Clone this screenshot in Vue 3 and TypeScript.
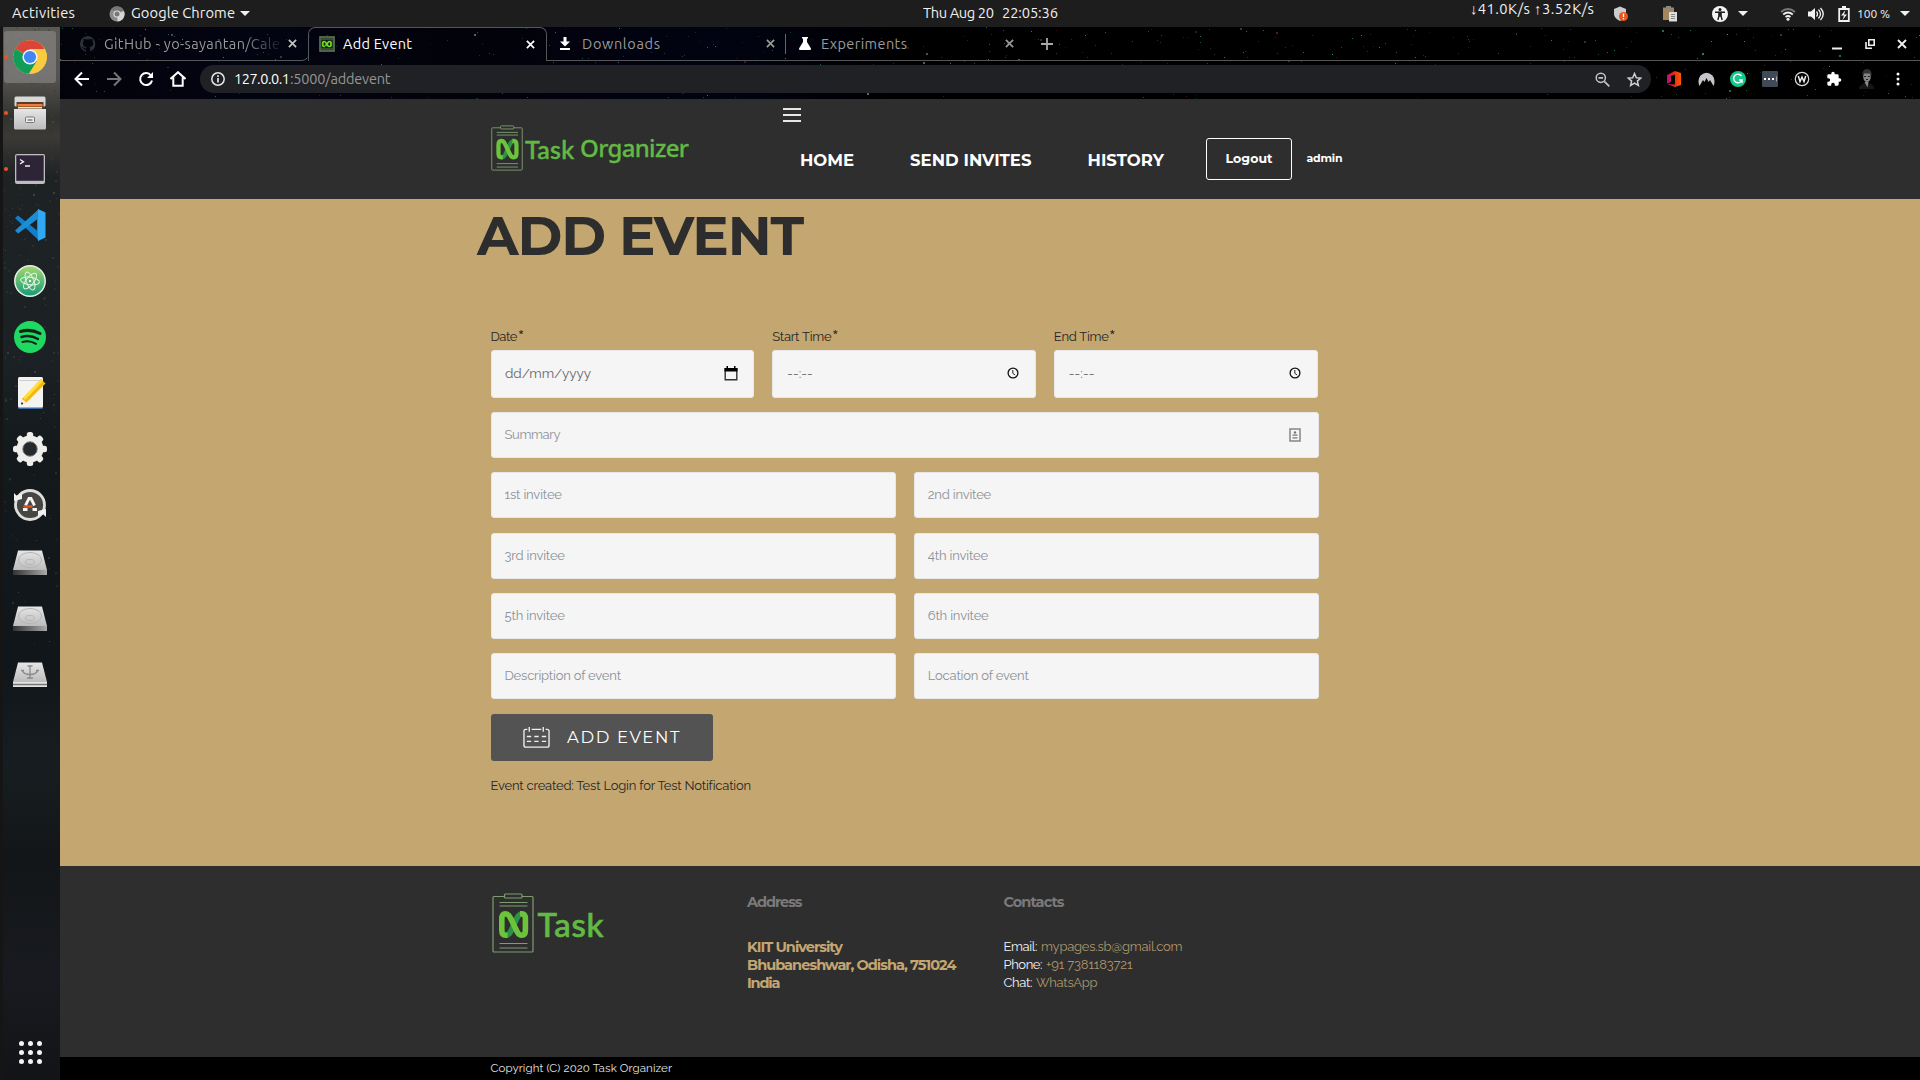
<script setup lang="ts">
interface Star { x: number; y: number; r: number; c: string; o: number }

// Spreads or tightens a label's tracking until it fills the given width.
const vFit = {
  mounted(el: HTMLElement, binding: { value: number }) {
    el.style.display = 'inline-block'
    el.style.whiteSpace = 'pre'
    const natural = el.getBoundingClientRect().width
    const count = Math.max((el.textContent ?? '').length - 1, 1)
    el.style.letterSpacing = `${(binding.value - natural) / count}px`
    el.style.width = `${binding.value}px`
  },
}

let seed = 11
const rnd = (): number => {
  seed = (seed * 16807) % 2147483647
  return seed / 2147483647
}
const tints = ['#2a8a5a', '#1c5a34', '#66707a', '#1fae78', '#3a4450', '#5a2020', '#24502e']
const stars: Star[] = Array.from({ length: 480 }, () => ({
  x: Math.round(rnd() * 1860),
  y: Math.round(rnd() * 71),
  r: rnd() > 0.9 ? 2 : 1,
  c: tints[Math.floor(rnd() * tints.length)],
  o: 0.35 + rnd() * 0.65,
}))
const specks: Star[] = Array.from({ length: 260 }, () => {
  const t = rnd()
  return {
    x: Math.round(rnd() * 56),
    y: Math.round(t * t * 640),
    r: rnd() > 0.6 ? 2 : 1,
    c: rnd() > 0.5 ? '#5a5852' : '#3c4040',
    o: 0.15 + rnd() * 0.45,
  }
})

const rows: { text: string; w: number }[][] = [
  [{ text: '1st invitee', w: 57.5 }, { text: '2nd invitee', w: 63.5 }],
  [{ text: '3rd invitee', w: 60.5 }, { text: '4th invitee', w: 60.5 }],
  [{ text: '5th invitee', w: 60.5 }, { text: '6th invitee', w: 61 }],
  [{ text: 'Description of event', w: 116.5 }, { text: 'Location of event', w: 101 }],
]
const times = [{ label: 'Start Time', w: 59.5 }, { label: 'End Time', w: 55 }]
const dock = ['chrome', 'files', 'terminal', 'code', 'atom', 'spotify', 'editor', 'gear', 'updater', 'disk', 'disk', 'usb']
const contacts = [
  { k: 'Email:', kw: 34, v: 'mypages.sb@gmail.com', vw: 141.5 },
  { k: 'Phone:', kw: 39, v: '+91 7381183721', vw: 86.5 },
  { k: 'Chat:', kw: 29, v: 'WhatsApp', vw: 61.5 },
]
</script>

<template>
  <svg width="0" height="0" class="defs">
    <defs>
      <linearGradient id="atomg" x1="0" y1="0" x2="0" y2="1"><stop offset="0" stop-color="#a5d96f" /><stop offset="1" stop-color="#129c77" /></linearGradient>
      <linearGradient id="metal" x1="0" y1="0" x2="0" y2="1"><stop offset="0" stop-color="#e6e6e6" /><stop offset="1" stop-color="#bcbcbc" /></linearGradient>
      <linearGradient id="base" x1="0" y1="0" x2="1" y2="0"><stop offset="0" stop-color="#333" /><stop offset="1" stop-color="#aaa" /></linearGradient>
      <linearGradient id="officeg" x1="0" y1="0" x2="1" y2="0"><stop offset="0" stop-color="#a3168a" /><stop offset=".4" stop-color="#e8201a" /><stop offset="1" stop-color="#ff5a00" /></linearGradient>
      <symbol id="board" viewBox="0 0 42 60">
        <g fill="none" stroke="#7d9c70" stroke-width="1.2">
          <rect x="1" y="3.5" width="40" height="55.5" rx="1" />
          <rect x="12.500" y="1" width="17.500" height="4" rx="1" fill="#2e2e2e" />
          <path d="M7.500 9.500h28M7.500 13h28M7.500 50.500h28M7.500 55h28" />
        </g>
        <g fill="none" stroke="#6cc33c" stroke-width="5.600">
          <path d="M14 42.200Q17 42 19 38L25 25Q27 21 30 21" stroke="#2f9047" />
          <path d="M15.500 42.300H13.500Q9.800 42.300 9.800 37V26Q9.800 20.800 13.500 20.800Q16.500 20.800 18.500 25L25 38.500Q26.800 42.300 29.800 42.300Q33.400 42.300 33.400 37V26Q33.400 20.800 29.800 20.800H28" />
        </g>
      </symbol>
      <symbol id="cross" viewBox="0 0 10 10"><path d="M1 1l8 8M9 1L1 9" stroke="currentColor" stroke-width="1.9" /></symbol>
      <symbol id="clock" viewBox="0 0 12 12"><circle cx="6" cy="6" r="4.900" fill="none" stroke="#111" stroke-width="1.300" /><path d="M5.800 3v3.300l2.300 1.700" fill="none" stroke="#222" /></symbol>
    </defs>
  </svg>

  <div class="desktop">
    <header class="topbar">
      <div class="left">
        <span v-fit="63" class="act">Activities</span>
        <svg class="mono" width="16" height="16" viewBox="0 0 16 16"><circle cx="8" cy="8" r="7.500" fill="#8b8b8b" /><path d="M8 8L15 5A7.500 7.500 0 0 1 8.500 15.500z" fill="#d5d5d5" /><path d="M1.500 4A7.500 7.500 0 0 1 15 5H8z" fill="#777" /><circle cx="8" cy="8" r="3.600" fill="#ddd" /><circle cx="8" cy="8" r="2.500" fill="#777" /></svg>
        <span v-fit="104">Google Chrome</span><i class="tri" />
      </div>
      <div class="clock"><span v-fit="71">Thu Aug 20</span><span v-fit="56">22:05:36</span></div>
      <div class="right">
        <span v-fit="124" class="net">↓41.0K/s ↑3.52K/s</span>
        <svg class="s1" width="16" height="16" viewBox="0 0 16 16"><path d="M1 3l6-2.500L13 3v5q0 4-6 7Q1 12 1 8z" fill="#ccc" /><circle cx="10.500" cy="10.500" r="4.500" fill="#e9541f" /><path d="M10.500 7.500v3.500M10.500 12v1.300" stroke="#fff" stroke-width="1.300" /></svg>
        <svg class="s2" width="16" height="16" viewBox="0 0 16 16"><path d="M1 1.500h11V14H1z" fill="#a5855a" /><path d="M4 0h5v3H4z" fill="#888" /><path d="M7 6h8v9.500H7z" fill="#ddd" /><path d="M9 8.500h4M9 10.500h4M9 12.500h4" stroke="#777" stroke-width=".8" /></svg>
        <svg class="s3" width="16" height="16" viewBox="0 0 16 16"><circle cx="8" cy="8" r="8" fill="#f4f4f4" /><circle cx="8" cy="3.600" r="1.500" fill="#1d1d1d" /><path d="M3 6.300h10M6.900 10l-1 4M9.100 10l1 4" stroke="#1d1d1d" stroke-width="1.400" /><path d="M6.200 5.700h3.600v5H6.200z" fill="#1d1d1d" /></svg><i class="tri t3" />
        <svg class="s4" width="16" height="14" viewBox="0 0 16 14"><g fill="none" stroke-width="1.800"><path d="M1 5q7-6 14 0" stroke="#777" /><path d="M3.200 7.500q4.800-4 9.600 0" stroke="#eee" /><path d="M5.500 10q2.500-2 5 0" stroke="#eee" /></g><circle cx="8" cy="12.200" r="1.500" fill="#eee" /></svg>
        <svg class="s5" width="16" height="14" viewBox="0 0 16 14"><path d="M0 4.500h3L7 1v12L3 9.500H0z" fill="#f2f2f2" /><path d="M8.500 4.500q2 2.500 0 5M10.500 2.500q4 4.500 0 9M12.500 1q5.500 6 0 12" fill="none" stroke="#f2f2f2" stroke-width="1.300" /></svg>
        <svg class="s6" width="12" height="16" viewBox="0 0 12 16"><path d="M4 1h4M1.200 3h9.600v12H1.200z" fill="none" stroke="#f2f2f2" stroke-width="1.800" /><path d="M7.500 4L3 9.500h3L4.500 14 9 8.500H6z" fill="#f2f2f2" /></svg>
        <span v-fit="33" class="pct">100 %</span><i class="tri t4" />
      </div>
    </header>

    <div class="body">
      <aside class="dock">
        <svg class="stones" width="57" height="1053"><rect v-for="(s, i) in specks" :key="i" :x="s.x" :y="s.y" :width="s.r" :height="s.r" :fill="s.c" :opacity="s.o" /></svg>
        <div v-for="(d, i) in dock" :key="i" class="tile" :class="{ on: i === 0, low: i > 8 }">
          <i v-if="i < 3" class="run" />
          <svg v-if="d === 'chrome'" width="34" height="34" viewBox="0 0 34 34"><circle cx="17" cy="17" r="16.800" fill="#fbcb3f" /><path d="M17 17L2.400 8.600A16.800 16.800 0 0 1 31.600 9H17z" fill="#dc4437" /><path d="M17 17l-1 0L2.400 8.600A16.800 16.800 0 0 0 16 33.800L24 21z" fill="#109d58" /><path d="M24 21l-8 12.800A16.800 16.800 0 0 0 31.800 9H17z" fill="#fbcb3f" /><circle cx="17" cy="17" r="7.600" fill="#f3f3f3" /><circle cx="17" cy="17" r="6.100" fill="#4285f4" /></svg>
          <svg v-else-if="d === 'files'" width="34" height="34" viewBox="0 0 34 34"><rect x="1.500" y=".5" width="31" height="10" rx="1.500" fill="#d8d8d8" /><rect x="3.500" y="6" width="27" height="7" fill="#5b3c25" /><path d="M4.500 8h25v2.500h-25z" fill="#f07a3a" /><path d="M5 11h24v1.500H5z" fill="#f3e6d0" /><path d="M1 13h32v19q0 1.500-1.500 1.500h-29Q1 33.500 1 32z" fill="url(#metal)" /><rect x="12.500" y="21" width="9" height="5.500" rx="1" fill="#eee" stroke="#777" /><rect x="14.500" y="23" width="5" height="2" fill="#999" /></svg>
          <svg v-else-if="d === 'terminal'" width="30" height="30" viewBox="0 0 30 30"><rect width="30" height="30" rx="2" fill="#bdbdbd" /><rect x="1.300" y="1.300" width="27.400" height="25.500" fill="#2d2438" /><path d="M5 5.500l3.500 2.200L5 10M10 12h5" fill="none" stroke="#eee" stroke-width="1.400" /></svg>
          <svg v-else-if="d === 'code'" width="34" height="34" viewBox="0 0 34 34"><path d="M2 10l3-2.500L26 24v8.500z" fill="#0f7fce" /><path d="M2 22.500l3 3L26 10V1z" fill="#1a8fd8" /><path d="M25 1l7.500 3.500v25L25 33z" fill="#30a9f2" /><path d="M25 1v32l-1-7V8z" fill="#188bd8" /></svg>
          <svg v-else-if="d === 'atom'" width="32" height="32" viewBox="0 0 32 32"><circle cx="16" cy="16" r="15.200" fill="url(#atomg)" stroke="#e8efe8" stroke-width="1.500" /><g fill="none" stroke="#e2f5e4" stroke-width="1"><ellipse cx="16" cy="16" rx="9.500" ry="3.800" transform="rotate(8 16 16)" /><ellipse cx="16" cy="16" rx="9.500" ry="3.800" transform="rotate(68 16 16)" /><ellipse cx="16" cy="16" rx="9.500" ry="3.800" transform="rotate(128 16 16)" /></g><circle cx="16" cy="16" r="1.200" fill="#fff" /></svg>
          <svg v-else-if="d === 'spotify'" width="32" height="32" viewBox="0 0 32 32"><circle cx="16" cy="16" r="16" fill="#1fd962" /><g fill="none" stroke="#12241a" stroke-linecap="round"><path d="M6.500 10.500q10-3 19.500 2" stroke-width="3" /><path d="M7.500 16q8.500-2.500 16.500 2" stroke-width="2.500" /><path d="M8.500 21q7-2 13.500 1.800" stroke-width="2" /></g></svg>
          <svg v-else-if="d === 'editor'" width="32" height="34" viewBox="0 0 32 34"><rect x="4" y="2" width="25" height="31" rx="1.500" fill="#3f68a8" /><rect x="4" y="1" width="25" height="30.500" rx="1.500" fill="#f3f3f1" /><path d="M5.500 4.500h22" stroke="#aaa" stroke-dasharray="1 1" /><path d="M8 23L27 3l4.500 4.500L12.500 26.500 7 28.500z" fill="#f4b90c" /><path d="M9.500 21.500L27 3l2 2L11 24z" fill="#ffdf3d" /><path d="M8 23l4.500 3.500L7 28.500z" fill="#f4ede0" /><circle cx="8" cy="27.500" r="1" fill="#222" /></svg>
          <svg v-else-if="d === 'gear'" width="34" height="34" viewBox="0 0 34 34"><g fill="#eeeeec"><rect v-for="n in 8" :key="n" x="13.800" y="0" width="6.400" height="8" rx="2.500" :transform="`rotate(${n * 45} 17 17)`" /></g><circle cx="17" cy="17" r="10.200" fill="none" stroke="#eeeeec" stroke-width="6.500" /><circle cx="17" cy="17" r="7.200" fill="#26292b" stroke="#777" /></svg>
          <svg v-else-if="d === 'updater'" width="34" height="34" viewBox="0 0 34 34"><circle cx="17" cy="17" r="14.500" fill="#474642" stroke="#dedede" stroke-width="2.800" /><path d="M1 13V5l2.500 2.500L9 5.500 9 11zM33 21v8l-2.500-2.500L25 28.500 25 23z" fill="#f0f0f0" /><path d="M12.500 17.500L16 10.500h2L21.500 17.500M10 21.500h4.500M19.500 21.500H24" fill="none" stroke="#f4f4f4" stroke-width="2.800" /><path d="M10.500 18.500h9" stroke="#e95420" stroke-width="2.400" /></svg>
          <svg v-else width="34" height="26" viewBox="0 0 34 26"><path d="M5 .5h24L34 20H0z" fill="url(#metal)" /><path d="M0 20h34v5H0z" :fill="d === 'usb' ? '#e2e2e2' : 'url(#base)'" /><g v-if="d === 'disk'" fill="none" stroke="#b4b4b4"><ellipse cx="17" cy="10" rx="11.500" ry="7.500" /><ellipse cx="17" cy="12" rx="4.500" ry="2.500" /></g><g v-else fill="none" stroke="#8b8b8b" stroke-width="1.300"><path d="M17 4v12M14 16h6M9.500 8.500q1 4 7.500 4t7.500-4M14.500 4h5M8 8.500h3M23 8.500h3" /><path d="M0 22.500h34" stroke="#777" /></g></svg>
        </div>
        <div class="apps"><i v-for="n in 9" :key="n" /></div>
      </aside>

      <main class="window">
        <div class="chrome">
          <svg class="sky" width="1860" height="72"><rect v-for="(s, i) in stars" :key="i" :x="s.x" :y="s.y" :width="s.r" :height="s.r" :fill="s.c" :opacity="s.o" /></svg>
          <div class="tabs">
            <div class="tab first">
              <svg width="16" height="16" viewBox="0 0 16 16"><path fill="#2b3137" d="M8 0C3.600 0 0 3.600 0 8c0 3.500 2.300 6.500 5.500 7.600.4.100.5-.2.500-.4v-1.500c-2 .4-2.700-.9-2.900-1.500-.3-.6-.8-1.100-1.200-1.300 1.700-.4 1.900 1.500 3.100 1.500.5 0 .8-.1 1-.2.100-.5.400-.9.600-1.100-1.800-.2-3.600-.9-3.600-4 0-.9.300-1.600.8-2.200-.1-.2-.4-1 .1-2.100 0 0 .7-.2 2.200.8a7.500 7.500 0 0 1 4 0c1.500-1 2.200-.8 2.200-.8.400 1.100.2 1.900.1 2.100.5.600.8 1.300.8 2.200 0 3.100-1.900 3.800-3.700 4 .3.300.6.800.6 1.500v2.200c0 .2.100.5.500.4A8 8 0 0 0 8 0z" /></svg>
              <span class="ttl fade"><span v-fit="176">GitHub - yo-sayantan/Cale</span></span>
              <svg class="x" width="9" height="9"><use href="#cross" /></svg>
            </div>
            <div class="tab active">
              <svg width="16" height="16" viewBox="0 0 16 16"><rect width="16" height="16" fill="#3c4a38" /><path d="M1 1h14v14H1z" fill="none" stroke="#5f7a58" /><path d="M2.500 4h11v8h-11z" fill="#16240f" /><path d="M6 10.500H5Q3.800 10.500 3.800 9.300V6.700Q3.800 5.500 5 5.500 6.300 5.500 7 7l1.500 2.200q.8 1.300 2 1.300 1.500 0 1.500-1.200V6.700Q12 5.500 10.800 5.500 9.800 5.500 9 6.500L6.500 10" fill="none" stroke="#6ddd2a" stroke-width="1.700" /></svg>
              <span class="ttl"><span v-fit="69">Add Event</span></span>
              <svg class="x" width="9" height="9"><use href="#cross" /></svg>
            </div>
            <div class="tab dl">
              <svg width="10" height="13" viewBox="0 0 10 13"><path d="M3.500 0h3v4.500H10L5 9.500 0 4.500h3.500zM0 11h10v2H0z" fill="#fff" /></svg>
              <span class="ttl"><span v-fit="78">Downloads</span></span>
              <svg class="x" width="9" height="9"><use href="#cross" /></svg>
            </div>
            <div class="tab ex">
              <svg width="12" height="13" viewBox="0 0 12 13"><path d="M3 0h6v1.500H8V5l4 6.500Q12 13 11 13H1Q0 13 0 11.500L4 5V1.500H3z" fill="#fff" /></svg>
              <span class="ttl"><span v-fit="86">Experiments</span></span>
              <svg class="x" width="9" height="9"><use href="#cross" /></svg>
            </div>
            <svg class="plus" width="12" height="12" viewBox="0 0 12 12"><path d="M6 0v12M0 6h12" stroke="#aaa" stroke-width="1.800" /></svg>
            <div class="wm">
              <svg width="10" height="12" viewBox="0 0 10 12"><path d="M0 10.500h10" stroke="#eee" stroke-width="2" /></svg>
              <svg width="10" height="12" viewBox="0 0 10 12"><path d="M3.800 1.800h5.400v5.400H3.800zM1 4v6.200h6" fill="none" stroke="#eee" stroke-width="1.600" /></svg>
              <svg width="10" height="10"><use href="#cross" /></svg>
            </div>
          </div>

          <div class="tools">
            <div class="nav">
              <svg width="16" height="16" viewBox="0 0 16 16"><path d="M15 8H2M8 1.500L1.500 8 8 14.500" fill="none" stroke="#fff" stroke-width="2" /></svg>
              <svg width="16" height="16" viewBox="0 0 16 16"><path d="M1 8h13M8 1.500L14.500 8 8 14.500" fill="none" stroke="#777" stroke-width="2" /></svg>
              <svg width="16" height="16" viewBox="0 0 16 16"><path d="M13 4.500A6 6 0 1 0 14 9.500" fill="none" stroke="#fff" stroke-width="2" /><path d="M15 1v6H9z" fill="#fff" /></svg>
              <svg width="16" height="16" viewBox="0 0 16 16"><path d="M.5 8L8 1.200 15.500 8M3.300 6.500v8.300h9.400V6.500" fill="none" stroke="#fff" stroke-width="2" /></svg>
            </div>
            <div class="omni">
              <svg width="14" height="14" viewBox="0 0 14 14"><circle cx="7" cy="7" r="6.200" fill="none" stroke="#e6e6e6" stroke-width="1.500" /><path d="M7 6v4.500M7 3.300v1.600" stroke="#e6e6e6" stroke-width="1.700" /></svg>
              <span v-fit="56" class="host">127.0.0.1</span><span v-fit="100.5" class="path">:5000/addevent</span>
              <svg class="mag" width="15" height="15" viewBox="0 0 15 15"><circle cx="5.800" cy="5.800" r="4.600" fill="none" stroke="#c4c4c4" stroke-width="1.500" /><path d="M3.500 5.800h4.600M9.300 9.300l5 5" stroke="#c4c4c4" stroke-width="1.700" /></svg>
              <svg class="star" width="15" height="15" viewBox="0 0 24 24"><path d="M12 2.500l2.900 6.600 7.100.7-5.400 4.700 1.600 7-6.200-3.700-6.200 3.700 1.600-7L2 9.800l7.100-.7z" fill="none" stroke="#d0d0d0" stroke-width="2.400" /></svg>
            </div>
            <div class="ext">
              <svg width="14" height="16" viewBox="0 0 14 16"><path d="M0 4L8 0l6 2v12l-6 2-8-3 8 .5V3.500L4 5v6l-4 1.500z" fill="url(#officeg)" /></svg>
              <svg width="17" height="15" viewBox="0 0 17 15"><path d="M1.500 14Q-1 8 2.500 3.500 8.500-2 14.500 3.500 18 8 15.500 14L12 8l-1.500 2L8.500 6l-2 4L5 8z" fill="#c5c6cb" /></svg>
              <svg width="16" height="16" viewBox="0 0 16 16"><circle cx="8" cy="8" r="8" fill="#12c98b" /><path d="M11.500 5A4.300 4.300 0 1 0 12 9H9M12 9v3" fill="none" stroke="#fff" stroke-width="1.400" /></svg>
              <svg width="16" height="16" viewBox="0 0 16 16"><rect width="16" height="16" rx="1" fill="#3f4a56" /><path d="M2 7h2v2H2zM6 7h2v2H6zM10 7h2v2h-2z" fill="#fff" /><path d="M14 5.500h1v5h-1z" fill="#9aa3ab" /></svg>
              <svg width="16" height="16" viewBox="0 0 16 16"><circle cx="8" cy="8" r="6.700" fill="none" stroke="#ddd" stroke-width="1.200" /><path d="M4.300 5l1.700 5.500L8 6l2 4.500L11.700 5" fill="none" stroke="#eee" stroke-width="1.500" /></svg>
              <svg width="16" height="16" viewBox="0 0 24 24"><path fill="#fff" d="M20.500 11H19V7a2 2 0 0 0-2-2h-4V3.500a2.500 2.500 0 0 0-5 0V5H4a2 2 0 0 0-2 2v3.800h1.500a2.700 2.700 0 0 1 0 5.400H2V20a2 2 0 0 0 2 2h3.800v-1.500a2.700 2.700 0 0 1 5.400 0V22H17a2 2 0 0 0 2-2v-4h1.500a2.500 2.500 0 0 0 0-5z" /></svg>
              <svg width="17" height="20" viewBox="0 0 17 20"><path d="M1 18q6-5 8-4 4 0 7 4v2H1z" fill="#161616" /><ellipse cx="9" cy="7.500" rx="3.800" ry="5.500" fill="#858585" /><path d="M4.500 6.500Q4 0 9 0t4.500 6.500L12 4.500 6 4.500z" fill="#333" /><path d="M6.500 13h4l-1 5.500z" fill="#8b8b8b" /><path d="M6 7.500h2M10 7.500h2M8 10.500h2" stroke="#222" /></svg>
              <svg width="4" height="14" viewBox="0 0 4 14"><circle cx="2" cy="2" r="1.500" fill="#fff" /><circle cx="2" cy="7" r="1.500" fill="#fff" /><circle cx="2" cy="12" r="1.500" fill="#fff" /></svg>
            </div>
          </div>
        </div>

        <div class="page">
          <nav class="head">
            <div class="brand">
              <svg width="32" height="46" preserveAspectRatio="none"><use href="#board" /></svg>
              <span v-fit="49" class="b1">Task</span><span v-fit="109" class="b2">Organizer</span>
            </div>
            <div class="menu">
              <div class="burger"><i /><i /><i /></div>
              <div class="links">
                <a v-fit="54">HOME</a><a v-fit="121.5">SEND INVITES</a><a v-fit="76.5">HISTORY</a>
              </div>
            </div>
            <button class="logout"><span v-fit="47">Logout</span></button>
            <span v-fit="36" class="user">admin</span>
          </nav>

          <section class="event">
            <h1><span v-fit="327">ADD EVENT</span></h1>
            <form class="form">
              <div class="row three">
                <div class="col">
                  <label><span v-fit="27">Date</span><sup>*</sup></label>
                  <div class="field tall"><span v-fit="86">dd/mm/yyyy</span><svg width="14" height="15" viewBox="0 0 14 15"><path d="M1.200 2.800h11.600v10.900H1.200z" fill="none" stroke="#333" stroke-width="1.400" /><path d="M.5 2h13v3.500H.5zM2.500 0h1.500v2H2.500zM10 0h1.500v2H10z" fill="#000" /></svg></div>
                </div>
                <div v-for="t in times" :key="t.label" class="col">
                  <label><span v-fit="t.w">{{ t.label }}</span><sup>*</sup></label>
                  <div class="field tall time"><span v-fit="25.5">--:--</span><svg width="12" height="12"><use href="#clock" /></svg></div>
                </div>
              </div>
              <div class="row"><div class="field sum"><span v-fit="56">Summary</span><svg width="12" height="14" viewBox="0 0 12 14"><rect x="1" y="1" width="10" height="12" fill="none" stroke="#858585" stroke-width="1.500" /><circle cx="6" cy="4.500" r="1.200" fill="#777" /><path d="M3.500 7.200h5M3.500 9.800h5" stroke="#777" stroke-width="1.300" /></svg></div></div>
              <div v-for="(r, i) in rows" :key="i" class="row">
                <div v-for="f in r" :key="f.text" class="field"><span v-fit="f.w">{{ f.text }}</span></div>
              </div>
              <button type="button" class="add">
                <svg width="27" height="23" viewBox="0 0 28 23"><g fill="none" stroke="#f0f0f0" stroke-width="1.400"><path d="M4.500 3H3Q1 3 1 5v14.500q0 2 2 2h22q2 0 2-2V5q0-2-2-2h-1.500M9 3h10M6.500 .5v5M21 .5v5" /><path d="M4 10.500h4.500M11.700 10.500h4.500M19.500 10.500H24M4 15.500h4.500M11.700 15.500h4.500M19.500 15.500H24" /></g></svg>
                <span v-fit="112.5">ADD EVENT</span>
              </button>
              <p class="note"><span v-fit="260">Event created: Test Login for Test Notification</span></p>
            </form>
          </section>

          <footer class="foot">
            <div class="flogo"><svg width="42" height="60"><use href="#board" /></svg><span v-fit="66">Task</span></div>
            <div class="address">
              <h5><span v-fit="55.5">Address</span></h5>
              <p><span v-fit="96">KIIT University</span></p><p><span v-fit="209.5">Bhubaneshwar, Odisha, 751024</span></p><p><span v-fit="33.5">India</span></p>
            </div>
            <div class="contacts">
              <h5><span v-fit="61">Contacts</span></h5>
              <p v-for="c in contacts" :key="c.k"><span v-fit="c.kw">{{ c.k }}</span><a v-fit="c.vw">{{ c.v }}</a></p>
            </div>
          </footer>
          <div class="copy"><span v-fit="181.5">Copyright (C) 2020 Task Organizer</span></div>
        </div>
      </main>
    </div>
  </div>
</template>

<style>
body { margin: 0; background: #000; overflow: hidden; }
</style>

<style scoped>
* { box-sizing: border-box; }
svg { display: block; flex: none; }
.defs { position: absolute; }
span, a { flex: none; }
.desktop { width: 1920px; height: 1080px; overflow: hidden; display: flex; flex-direction: column; font-family: Ubuntu, "Noto Sans", sans-serif; }
.topbar { height: 27px; background: #1d1d1d; color: #f0f0f0; display: grid; grid-template-columns: 923px 547px 450px; font-size: 14.700px; line-height: 26px; }
.left, .clock, .right { display: flex; align-items: center; height: 27px; }
.left > span, .clock > span { margin-top: -2px; }
.left { padding-left: 12px; }
.mono { margin: 0 6px 0 34px; }
.tri { width: 0; height: 0; border: 5px solid transparent; border-bottom: 0; border-top: 5px solid #f0f0f0; margin-left: 5px; }
.clock { gap: 8px; }
.net { line-height: 18px; align-self: flex-start; }
.s1 { margin-left: 19px; }
.s2 { margin-left: 33px; }
.s3 { margin-left: 34px; }
.t3 { margin-left: 10px; }
.s4 { margin-left: 32px; }
.s5 { margin-left: 12px; }
.s6 { margin-left: 14px; }
.pct { margin-left: 7px; font-size: 12px; }
.t4 { margin-left: 10px; }

.body { display: flex; height: 1053px; }
.dock { width: 60px; flex: none; position: relative; border-left: 3px solid #151515; background: linear-gradient(180deg, #5b5953 0, #55534e 50px, #32322f 90px, #3a3936 110px, #1e2223 150px, #1b2124 330px, #14191c 420px, #10161a 640px, #171d20 740px, #131618 830px, #181a1f 950px, #131417 1053px); display: flex; flex-direction: column; }
.stones { position: absolute; left: 0; top: 0; }
.tile { position: relative; height: 52px; width: 52px; margin: 4px 0 0 1px; display: flex; align-items: center; justify-content: center; border-radius: 3px; }
.tile.on { background: rgba(150, 150, 150, .5); }
.tile.low { padding-top: 3px; }
.run { position: absolute; left: 0; top: 24px; width: 4px; height: 4px; border-radius: 50%; background: #e95420; }
.apps { position: relative; margin: auto 0 16px 15.500px; display: grid; grid-template-columns: repeat(3, 5px); gap: 4px; }
.apps i { width: 5px; height: 5px; border-radius: 50%; background: #f4f4f4; }

.window { flex: 1; display: flex; flex-direction: column; }
.chrome { position: relative; height: 72px; background: linear-gradient(90deg, #02030a 0, #020412 200px, #02020a 400px, #010312 650px, #000 860px, #000 1500px, #000 100%); }
.sky { position: absolute; left: 0; top: 0; }
.tabs { position: relative; height: 34px; display: flex; color: #9a9a9a; font-size: 14.500px; line-height: 33px; }
.tab { display: flex; align-items: center; height: 34px; border-bottom: 1px solid #565656; }
.ttl { margin-left: 8px; line-height: 32px; }
.x { margin-left: auto; }
.first { width: 248px; padding: 0 11px 0 20px; border-radius: 0 0 6px 0; border-right: 0; color: #999; }
.fade { width: 178px; overflow: hidden; -webkit-mask-image: linear-gradient(90deg, #000 78%, transparent 102%); mask-image: linear-gradient(90deg, #000 78%, transparent 102%); }
.first .x { color: #c5c5c5; }
.active { width: 239px; padding: 0 11px 1px 10px; color: #fff; border: 1px solid #565656; border-bottom: 0; border-radius: 7px 7px 0 0; }
.dl { width: 239px; padding: 0 11px 0 13px; position: relative; }
.dl .ttl { margin-left: 12px; }
.dl::after { content: ""; position: absolute; right: 0; top: 7px; width: 1px; height: 20px; background: #666; }
.ex { padding: 0 13px 0 13px; }
.ex .ttl { margin-left: 10px; }
.tab.ex { width: 241px; }
.plus { margin: 11px 0 0 14px; }
.tabs::after { content: ""; position: absolute; left: 966px; right: 0; bottom: 0; height: 1px; background: #565656; }
.wm { margin-left: auto; padding-right: 13px; display: flex; align-items: center; gap: 22.500px; color: #eee; height: 34px; }
.tools { position: relative; height: 38px; display: flex; align-items: center; padding: 0 0 2px 14px; }
.nav { display: flex; gap: 16px; width: 126px; flex: none; }
.omni { width: 1451px; height: 28px; border-radius: 14px; background: #202124; display: flex; align-items: center; padding: 0 9.500px 0 11px; font-size: 14.500px; line-height: 27px; }
.omni span { margin-top: -1px; }
.host { color: #fff; margin-left: 9px; }
.path { color: #969696; }
.mag { margin-left: auto; }
.star { margin-left: 17px; }
.ext { display: grid; grid-template-columns: repeat(8, 32px); place-items: center; margin-left: 7px; }

.page { height: 981px; background: #c4a671; font-family: Raleway, Lato, sans-serif; display: flex; flex-direction: column; }
.head { height: 100px; background: #2e2e2e; color: #fff; display: flex; font-family: Montserrat, Inter, sans-serif; font-weight: 700; padding-left: 431px; }
.brand { width: 292px; display: flex; padding-top: 26px; color: #62b944; font-family: "Noto Sans", sans-serif; font-weight: 500; line-height: 46px; -webkit-text-stroke: .3px #62b944; }
.b1 { font-family: Lato, sans-serif; font-size: 25px; margin-left: 2px; font-weight: 500; padding-top: 1px; -webkit-text-stroke-width: .5px; }
.b2 { font-size: 24px; margin-left: 6px; }
.menu { width: 423px; }
.burger { display: flex; flex-direction: column; gap: 4px; width: 17.500px; padding-top: 9px; }
.burger i { height: 2px; background: #e8e8e8; }
.links { display: flex; gap: 56px; padding: 0 0 0 17px; font-size: 16.500px; line-height: 24px; margin-top: 26px; }
.logout { width: 86px; height: 42px; margin-top: 39px; background: none; border: 1px solid #fff; border-radius: 3px; color: #fff; font: 700 12.500px/38px Montserrat, Inter, sans-serif; padding: 0; text-align: center; }
.user { font-size: 11px; line-height: 20px; margin: 49px 0 0 14.500px; font-weight: 700; }

.event { height: 667px; }
h1 { margin: 0; padding: 5px 0 0 417px; font: 700 54.400px/64px Montserrat, Inter, sans-serif; color: #2d2d2d; }
.form { margin: 58px 0 0 430.500px; width: 828.500px; display: flex; flex-direction: column; }
.row { display: flex; gap: 18px; margin-bottom: 14.300px; }
.row.three { gap: 18px; width: 827px; margin-bottom: 14px; }
.col { flex: 1; }
label { display: flex; height: 24px; font-size: 13px; line-height: 22px; color: #262626; }
sup { font-size: 22px; font-weight: 400; line-height: 24px; height: 20px; width: 7px; }
.field { flex: 1; height: 46px; display: flex; align-items: center; justify-content: space-between; background: #f5f5f5; border: 1px solid #e8e8e8; border-radius: 3px; padding: 0 18px 0 13px; font-size: 13px; line-height: 20px; color: #8c929a; }
.tall { height: 48px; padding: 0 15.500px 2px 13.500px; color: #666; font-size: 13.500px; }
.sum { padding-right: 17px; }
.time { padding-left: 14px; }
.add { width: 222px; height: 47px; margin: 1px 0 0; border: 0; border-radius: 3px; background: #535353; color: #fff; display: flex; align-items: center; padding: 0 0 0 32.500px; gap: 17px; font: 400 16.500px/24px Montserrat, Inter, sans-serif; }
.add span { margin-top: -2px; }
.note { margin: 15px 0 0; font-size: 13px; line-height: 20px; color: #262626; }

.foot { height: 191px; background: #2e2e2e; padding: 27px 0 0 431.500px; display: flex; }
.flogo { width: 255.500px; display: flex; gap: 4px; color: #62b944; font: 500 33px/62px Lato, sans-serif; }
.flogo span { -webkit-text-stroke: .7px #62b944; }
.address { width: 256.500px; font-family: Montserrat, Inter, sans-serif; }
.address p, h5 { font-weight: 700; font-size: 14.500px; line-height: 18px; margin: 0; }
.address p { color: #c4a671; }
h5 { font-family: Montserrat, Inter, sans-serif; color: #7a7a7a; }
.address h5 { margin-bottom: 26.500px; }
.contacts h5 { margin-bottom: 27px; }
.contacts p { margin: 0; font-size: 13px; line-height: 18px; color: #f2f2f2; display: flex; gap: 3.500px; }
.contacts a { color: #b0966a; }
.copy { height: 23px; background: #000; color: #e4e4e4; padding-left: 430.500px; font-size: 11.500px; line-height: 22px; }
</style>
